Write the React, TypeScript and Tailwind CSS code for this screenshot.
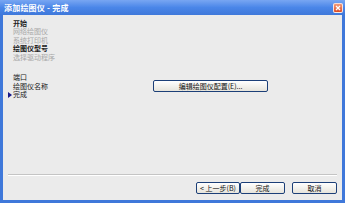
import React from 'react';

const font = { fontFamily: '"Noto Sans CJK SC", "Liberation Sans", sans-serif' };

interface Step {
  label: string;
  kind: 'bold' | 'gray' | 'normal';
  current?: boolean;
}

const topSteps: Step[] = [
  { label: '开始', kind: 'bold' },
  { label: '网络绘图仪', kind: 'gray' },
  { label: '系统打印机', kind: 'gray' },
  { label: '绘图仪型号', kind: 'bold' },
  { label: '选择驱动程序', kind: 'gray' },
];

const bottomSteps: Step[] = [
  { label: '端口', kind: 'normal' },
  { label: '绘图仪名称', kind: 'normal' },
  { label: '完成', kind: 'normal', current: true },
];

function StepRow({ step }: { step: Step }) {
  const color = step.kind === 'gray' ? 'text-[#a8a8a8]' : 'text-[#1a1a1a]';
  const weight = step.kind === 'bold' ? 'font-bold' : 'font-normal';
  return (
    <div className="relative h-[8.5px] flex items-center">
      {step.current && (
        <svg className="absolute -left-[5px] top-[1px]" width="4" height="6" viewBox="0 0 4 6">
          <path d="M0 0 L4 3 L0 6 Z" fill="#1a1a8a" />
        </svg>
      )}
      <span className={`text-[7px] leading-[7px] whitespace-nowrap ${color} ${weight}`}>
        {step.label}
      </span>
    </div>
  );
}

function XpButton({ children, className = '' }: { children: React.ReactNode; className?: string }) {
  return (
    <button
      className={`h-[12px] rounded-[2px] border border-[#1c3f78] bg-gradient-to-b from-[#ffffff] to-[#e6e4dc] text-[7px] leading-none text-[#111] flex items-center justify-center ${className}`}
      style={font}
    >
      {children}
    </button>
  );
}

export default function App() {
  return (
    <div className="w-[345px] h-[203px] flex flex-col bg-[#3f78da] overflow-hidden" style={font}>
      {/* Title bar */}
      <div className="h-[15px] shrink-0 flex items-center justify-between pl-[4px] pr-[2px] bg-gradient-to-b from-[#78a6f2] via-[#4a86e8] to-[#3f78da]">
        <span className="text-[8px] font-bold text-white leading-none tracking-[0.2px]">
          添加绘图仪 - 完成
        </span>
        <div className="w-[10px] h-[10px] rounded-[2px] border border-white/80 bg-gradient-to-b from-[#f29a78] to-[#dc4a22] flex items-center justify-center">
          <svg width="6" height="6" viewBox="0 0 6 6">
            <path d="M1 1 L5 5 M5 1 L1 5" stroke="white" strokeWidth="1.3" />
          </svg>
        </div>
      </div>

      {/* Body */}
      <div className="flex-1 flex flex-col mx-[3px] mb-[3px] bg-[#ebebeb]">
        <div className="flex-1 flex">
          <div className="w-[140px] pl-[10px] pt-[4px] flex flex-col">
            {topSteps.map((s) => (
              <StepRow key={s.label} step={s} />
            ))}
            <div className="h-[12px]" />
            {bottomSteps.map((s) => (
              <StepRow key={s.label} step={s} />
            ))}
          </div>
          <div className="pt-[65px] pl-[10px]">
            <XpButton className="w-[115px] h-[11px]">编辑绘图仪配置(E)...</XpButton>
          </div>
        </div>

        {/* Separator */}
        <div className="mx-[5px] h-[2px] border-t border-[#c4c4c4] border-b border-b-white" />

        {/* Buttons */}
        <div className="h-[24px] flex items-start justify-end pr-[5px] pt-[6px]">
          <XpButton className="w-[44px]">&lt; 上一步(B)</XpButton>
          <XpButton className="w-[45px]">完成</XpButton>
          <XpButton className="w-[45px] ml-[7px]">取消</XpButton>
        </div>
      </div>
    </div>
  );
}
